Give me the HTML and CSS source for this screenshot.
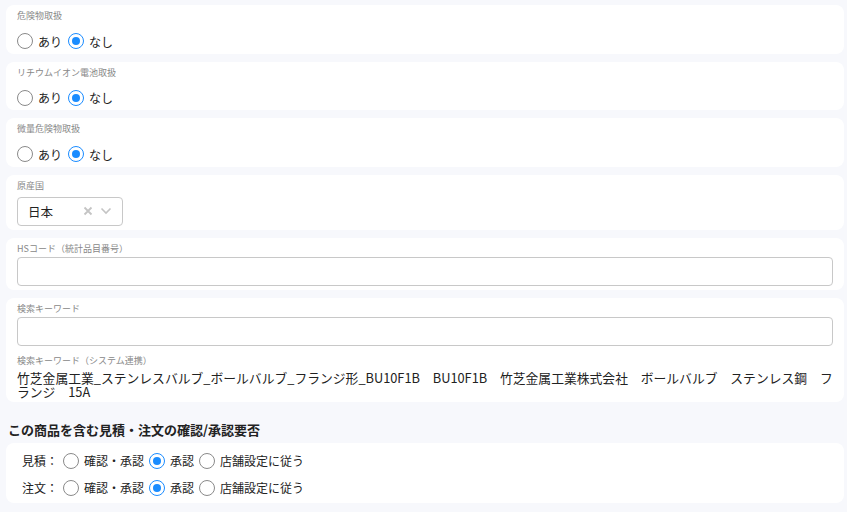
FILE: index.html
```html
<!DOCTYPE html>
<html lang="ja">
<head>
    <meta charset="UTF-8">
    <title>商品設定</title>
    <link rel="stylesheet" href="styles.css">
</head>
<body>
<div class="page">
    <div class="card">
        <div class="field-label">危険物取扱</div>
        <div class="radio-row">
            <label class="radio"><span class="dot"></span>あり</label>
            <label class="radio"><span class="dot checked"></span>なし</label>
        </div>
    </div>
    <div class="card">
        <div class="field-label">リチウムイオン電池取扱</div>
        <div class="radio-row">
            <label class="radio"><span class="dot"></span>あり</label>
            <label class="radio"><span class="dot checked"></span>なし</label>
        </div>
    </div>
    <div class="card">
        <div class="field-label">微量危険物取扱</div>
        <div class="radio-row">
            <label class="radio"><span class="dot"></span>あり</label>
            <label class="radio"><span class="dot checked"></span>なし</label>
        </div>
    </div>
    <div class="card">
        <div class="field-label">原産国</div>
        <div class="select">
            <span class="select-value">日本</span>
            <svg class="select-clear" width="10" height="10" viewBox="0 0 10 10"><path d="M1.5 1.5 L8.5 8.5 M8.5 1.5 L1.5 8.5" stroke="#c4c4c4" stroke-width="1.8" fill="none"/></svg>
            <svg class="select-arrow" width="12" height="8" viewBox="0 0 12 8"><path d="M1.5 1.5 L6 6 L10.5 1.5" stroke="#c4c4c4" stroke-width="1.6" fill="none"/></svg>
        </div>
    </div>
    <div class="card">
        <div class="field-label">HSコード（統計品目番号）</div>
        <input type="text" class="text-input">
    </div>
    <div class="card">
        <div class="field-label">検索キーワード</div>
        <input type="text" class="text-input">
        <div class="field-label second">検索キーワード（システム連携）</div>
        <div class="keywords">竹芝金属工業_ステンレスバルブ_ボールバルブ_フランジ形_BU10F1B　BU10F1B　竹芝金属工業株式会社　ボールバルブ　ステンレス鋼　フランジ　15A</div>
    </div>

    <h3 class="section-title">この商品を含む見積・注文の確認/承認要否</h3>
    <div class="card approval">
        <div class="approval-row">
            <span class="row-name">見積：</span>
            <label class="radio"><span class="dot"></span>確認・承認</label>
            <label class="radio"><span class="dot checked"></span>承認</label>
            <label class="radio"><span class="dot"></span>店舗設定に従う</label>
        </div>
        <div class="approval-row">
            <span class="row-name">注文：</span>
            <label class="radio"><span class="dot"></span>確認・承認</label>
            <label class="radio"><span class="dot checked"></span>承認</label>
            <label class="radio"><span class="dot"></span>店舗設定に従う</label>
        </div>
    </div>
</div>
</body>
</html>
```

FILE: styles.css
```css
body {
    margin: 0;
    background-color: #f7f8fc;
    font-family: "Noto Sans CJK JP", "Noto Sans", sans-serif;
    color: #222;
}
.page {
    padding: 5px 3px 0 6px;
    display: flex;
    flex-direction: column;
    gap: 8px;
}
.card {
    background-color: #fff;
    border-radius: 8px;
    padding: 4px 11px 3.5px 11px;
}
.field-label {
    font-size: 9px;
    line-height: 13px;
    color: #888;
}
.field-label.second {
    margin-top: 7.5px;
}
.radio-row {
    display: flex;
    gap: 6px;
    margin-top: 10px;
    height: 18px;
    align-items: center;
}
.radio {
    display: flex;
    align-items: center;
    gap: 5px;
    font-size: 12px;
    color: #222;
}
.dot {
    width: 14px;
    height: 14px;
    border: 1px solid #8a8a8a;
    border-radius: 50%;
    position: relative;
    background: #fff;
}
.dot.checked {
    border-color: #1a8cff;
}
.dot.checked::after {
    content: "";
    position: absolute;
    left: 3px;
    top: 3px;
    width: 8px;
    height: 8px;
    border-radius: 50%;
    background: #1a8cff;
}
.select {
    margin-top: 5px;
    width: 106px;
    height: 29px;
    border: 1px solid #c8c8c8;
    border-radius: 4px;
    display: flex;
    align-items: center;
    padding: 0 10px;
    box-sizing: border-box;
    margin-bottom: 1px;
}
.select-value {
    font-size: 12.5px;
    flex: 1;
}
.select-clear {
    margin-right: 7px;
}
.text-input {
    display: block;
    width: 100%;
    height: 29px;
    margin: 2px 0 0.5px 0;
    border: 1px solid #c8c8c8;
    border-radius: 4px;
    box-sizing: border-box;
}
.keywords {
    font-size: 12.8px;
    line-height: 13.5px;
    color: #222;
    margin-top: 4.5px;
    word-break: break-all;
}
.section-title {
    font-size: 13px;
    line-height: 18px;
    font-weight: bold;
    margin: 11px 0 -4px 2px;
    color: #222;
}
.approval {
    padding: 8px 11px 5px 16px;
    display: flex;
    flex-direction: column;
    gap: 7px;
}
.approval-row {
    display: flex;
    align-items: center;
    gap: 5px;
    height: 20px;
}
.approval-row .radio {
    font-size: 12px;
    gap: 5px;
}
.row-name {
    font-size: 12px;
    width: 36px;
}
```
